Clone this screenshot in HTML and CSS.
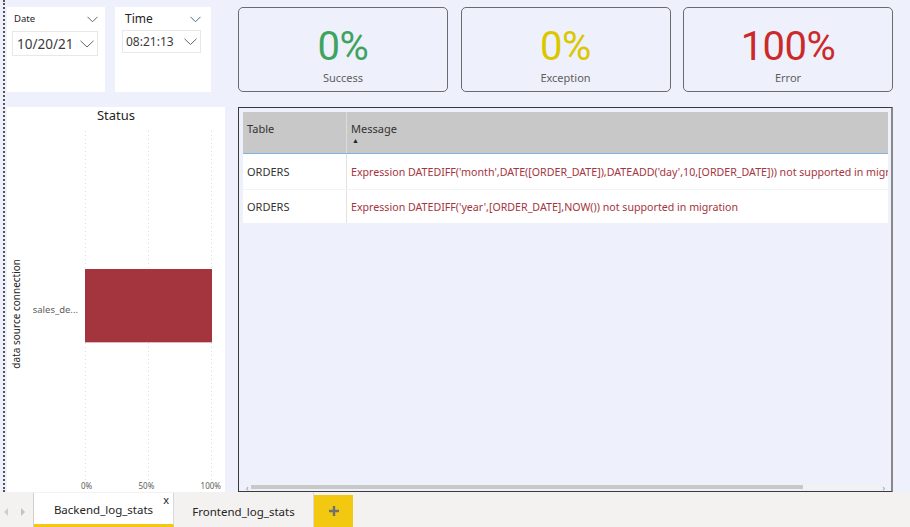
FILE: index.html
```html
<!DOCTYPE html>
<html>
<head>
<meta charset="utf-8">
<link rel="stylesheet" href="styles.css">
</head>
<body>
<div class="page">
  <div class="canvas">
    <div class="left-col">
      <div class="slicers">
        <div class="slicer slicer-date">
          <div class="slicer-head">
            <span class="slicer-label small">Date</span>
            <svg class="chev" width="11" height="7" viewBox="0 0 11 7"><path d="M0.5 0.8 L5.5 5.8 L10.5 0.8" fill="none" stroke="#666" stroke-width="1"/></svg>
          </div>
          <div class="dropdown dd-date">
            <span class="dd-text big">10/20/21</span>
            <svg class="chev" width="14" height="8" viewBox="0 0 14 8"><path d="M0.5 0.8 L7 7 L13.5 0.8" fill="none" stroke="#666" stroke-width="1"/></svg>
          </div>
        </div>
        <div class="slicer slicer-time">
          <div class="slicer-head">
            <span class="slicer-label">Time</span>
            <svg class="chev" width="11" height="7" viewBox="0 0 11 7"><path d="M0.5 0.8 L5.5 5.8 L10.5 0.8" fill="none" stroke="#4a6a9a" stroke-width="1"/></svg>
          </div>
          <div class="dropdown dd-time">
            <span class="dd-text">08:21:13</span>
            <svg class="chev" width="13" height="7" viewBox="0 0 13 7"><path d="M0.5 0.8 L6.5 6.5 L12.5 0.8" fill="none" stroke="#666" stroke-width="1"/></svg>
          </div>
        </div>
      </div>
      <div class="status-panel">
        <div class="status-title">Status</div>
        <div class="chart">
          <div class="y-title"><span>data source connection</span></div>
          <div class="cat-col"><span class="cat-label">sales_de...</span></div>
          <div class="plot-col">
            <div class="plot">
              <svg class="plot-svg" width="128" height="349" viewBox="0 0 128 349" preserveAspectRatio="none">
                <line x1="0.5" y1="0" x2="0.5" y2="349" stroke="#ddd" stroke-dasharray="1 3"/>
                <line x1="63.5" y1="0" x2="63.5" y2="349" stroke="#ddd" stroke-dasharray="1 3"/>
                <line x1="126.5" y1="0" x2="126.5" y2="349" stroke="#ddd" stroke-dasharray="1 3"/>
                <rect x="0" y="138" width="127" height="74" fill="#a4343e"/>
                <rect x="0" y="211" width="127" height="1" fill="#e3b6ba"/>
              </svg>
            </div>
            <div class="x-axis"><span>0%</span><span>50%</span><span>100%</span></div>
          </div>
        </div>
      </div>
    </div>
    <div class="right-col">
      <div class="cards">
        <div class="card"><div class="kpi green">0%</div><div class="kpi-label">Success</div></div>
        <div class="card"><div class="kpi yellow">0%</div><div class="kpi-label">Exception</div></div>
        <div class="card"><div class="kpi red">100%</div><div class="kpi-label">Error</div></div>
      </div>
      <div class="table-panel">
        <div class="table">
          <div class="thead">
            <div class="th c1">Table</div>
            <div class="th c2">Message<span class="sort">&#9650;</span></div>
          </div>
          <div class="tr r1">
            <div class="td c1">ORDERS</div>
            <div class="td c2 msg">Expression DATEDIFF('month',DATE([ORDER_DATE]),DATEADD('day',10,[ORDER_DATE])) not supported in migration</div>
          </div>
          <div class="tr r2">
            <div class="td c1">ORDERS</div>
            <div class="td c2 msg">Expression DATEDIFF('year',[ORDER_DATE],NOW()) not supported in migration</div>
          </div>
        </div>
        <div class="spacer"></div>
        <div class="hscroll">
          <span class="arr">&#8249;</span>
          <div class="track"><div class="thumb"></div></div>
          <span class="arr">&#8250;</span>
        </div>
      </div>
    </div>
  </div>
  <div class="tabbar">
    <div class="nav">
      <svg width="8" height="10" viewBox="0 0 8 10"><path d="M6 1 L2 5 L6 9 Z" fill="#d0cecc"/></svg>
      <svg width="8" height="10" viewBox="0 0 8 10"><path d="M2 1 L6 5 L2 9 Z" fill="#c4c2c0"/></svg>
    </div>
    <div class="tab active"><span>Backend_log_stats</span><span class="close">x</span></div>
    <div class="tab"><span>Frontend_log_stats</span></div>
    <div class="add">
      <svg width="12" height="12" viewBox="0 0 12 12"><path d="M6 1 V11 M1 6 H11" stroke="#707070" stroke-width="2.4"/></svg>
    </div>
  </div>
</div>
</body>
</html>
```
FILE: styles.css
```css
* { box-sizing: border-box; }
html, body { margin: 0; padding: 0; }
body {
  background: #eef1fb;
  font-family: "Noto Sans", "Open Sans", sans-serif;
  color: #252423;
  width: 910px;
  height: 527px;
  overflow: hidden;
}
.page { display: flex; flex-direction: column; height: 527px; }
.canvas {
  height: 492px;
  display: flex;
  margin-left: 3px;
  border-left: 2px dotted #555;
  padding: 7px 0 0 2px;
  gap: 13px;
  overflow: hidden;
}
.left-col { width: 218px; display: flex; flex-direction: column; gap: 15px; }
.slicers { display: flex; gap: 10px; height: 85px; }
.slicer { background: #fff; height: 85px; }
.slicer-date { width: 98px; padding: 5px 7px 0 5px; }
.slicer-time { width: 96px; padding: 5px 10px 0 7px; }
.slicer-head { display: flex; justify-content: space-between; align-items: center; }
.slicer-label { font-size: 12px; line-height: 14px; color: #252423; padding-left: 3px; }
.slicer-label.small { font-size: 9.5px; padding-left: 2px; }
.dropdown {
  border: 1px solid #e8e8e8;
  display: flex;
  align-items: center;
  justify-content: space-between;
}
.dd-date { margin-top: 5px; height: 25px; padding: 0 3px 0 4px; }
.dd-time { margin-top: 4px; height: 23px; padding: 0 3px 0 3px; }
.dd-text { font-size: 12px; color: #3b3a39; }
.dd-text.big { font-size: 13.5px; }
.chev { display: block; }

.status-panel { background: #fff; flex: 1; display: flex; flex-direction: column; min-height: 0; }
.status-title { text-align: center; font-size: 13px; line-height: 16px; padding-top: 0; height: 24px; color: #252423; }
.chart { flex: 1; display: flex; min-height: 0; }
.y-title { width: 17px; display: flex; align-items: center; justify-content: center; padding-top: 4px; }
.y-title span {
  writing-mode: vertical-rl;
  transform: rotate(180deg);
  font-size: 10px;
  color: #252423;
  white-space: nowrap;
}
.cat-col { width: 61px; display: flex; align-items: center; justify-content: flex-end; padding-right: 7px; padding-bottom: 4px; }
.cat-label { font-size: 9.5px; color: #605e5c; white-space: nowrap; }
.plot-col { width: 140px; display: flex; flex-direction: column; }
.plot { height: 349px; }
.plot-svg { display: block; }
.x-axis { display: flex; justify-content: space-between; width: 140px; font-size: 8px; line-height: 9px; color: #605e5c; margin-left: -4px; padding-top: 1px; }

.right-col { width: 655px; display: flex; flex-direction: column; gap: 15px; }
.cards { display: grid; grid-template-columns: 210px 210px 210px; justify-content: space-between; height: 85px; }
.card {
  border: 1px solid #6b6b6b;
  border-radius: 5px;
  display: flex;
  flex-direction: column;
  align-items: center;
  padding-top: 18px;
}
.kpi { font-family: "Roboto", "Noto Sans", sans-serif; font-size: 40px; line-height: 42px; letter-spacing: -0.5px; }
.green { color: #3fa35f; }
.yellow { color: #dbc700; }
.red { color: #cb2a2a; }
.kpi-label { font-size: 11px; color: #605e5c; margin-top: 2px; }

.table-panel {
  flex: 1;
  border: 1px solid #3a3a3a;
  border-right: 2px solid #888;
  padding: 4px 3px 0 4px;
  display: flex;
  flex-direction: column;
  min-height: 0;
}
.table { background: #fff; font-size: 11px; }
.thead { display: flex; background: #c8c8c8; height: 42px; border-bottom: 1px solid #7fb3e0; }
.th { padding: 9px 4px 0 4px; color: #333; line-height: 15px; }
.thead .c1 { border-right: 1px solid #dcdcdc; }
.sort { display: block; font-size: 7px; line-height: 7px; color: #222; margin-top: 1px; margin-left: 1px; }
.c1 { width: 104px; flex: none; }
.c2 { flex: 1; min-width: 0; }
.tr { display: flex; }
.r1 { height: 36px; border-bottom: 1px solid #f3f3f3; }
.r2 { height: 33px; }
.td { display: flex; align-items: center; padding: 0 4px; white-space: nowrap; overflow: hidden; color: #333; }
.tr .c1 { border-right: 1px solid #e2e2e2; }
.msg { color: #a4343e; font-size: 10.65px; }
.spacer { flex: 1; }
.hscroll { height: 6px; display: flex; align-items: flex-start; gap: 3px; padding: 0 3px; }
.arr { font-size: 8px; line-height: 5px; color: #888; }
.track { flex: 1; height: 4px; background: #f2f2f2; }
.thumb { width: 552px; height: 4px; background: #c8c8c8; }

.tabbar { height: 35px; background: #f3f2f1; display: flex; align-items: stretch; }
.nav { width: 34px; display: flex; align-items: center; gap: 9px; padding-left: 2px; padding-top: 4px; border-right: 1px solid #d0d0d0; margin-top: 1px; }
.nav svg { display: block; }
.tab {
  width: 140px;
  display: flex;
  align-items: center;
  justify-content: center;
  font-size: 11.5px;
  color: #252423;
  position: relative;
  border-right: 1px solid #d8d8d8;
  padding-top: 3px;
}
.tab.active { background: #fff; border-bottom: 3px solid #f2c811; margin-top: 1px; padding-top: 2px; }
.close { position: absolute; right: 4px; top: 1px; font-size: 11px; line-height: 12px; color: #252423; }
.add { width: 39px; background: #f2c811; margin-top: 3px; display: flex; align-items: center; justify-content: center; }
.add svg { display: block; }
```
